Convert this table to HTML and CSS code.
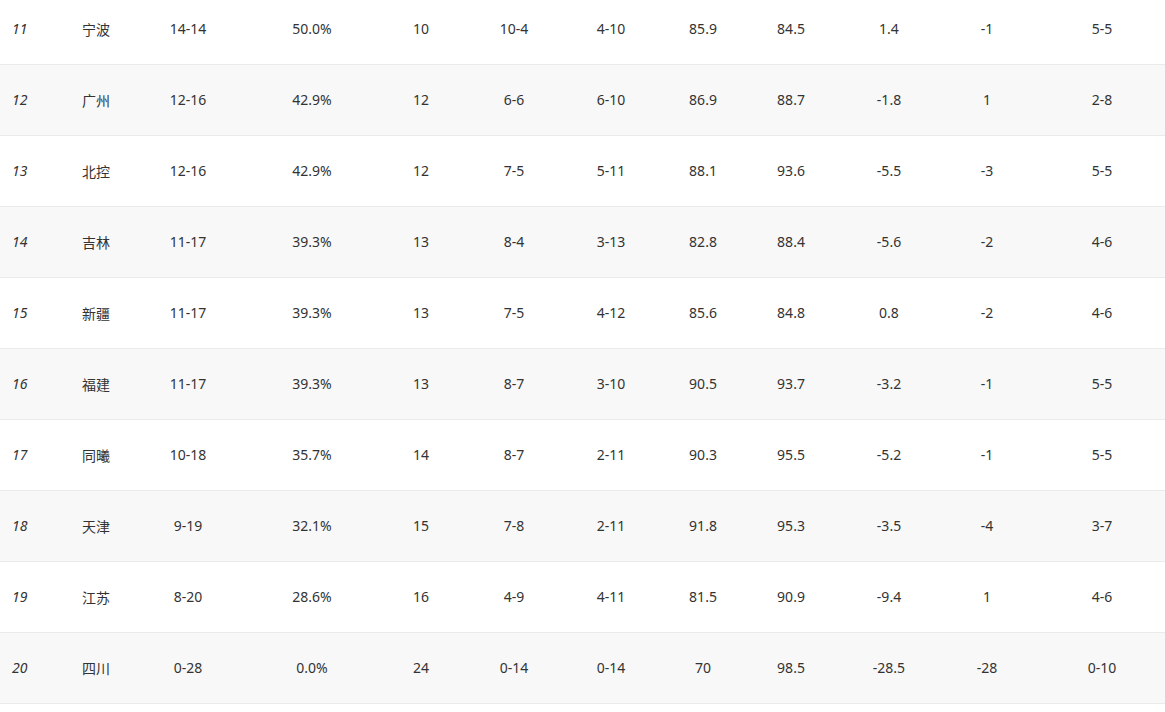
FILE: index.html
```html
<!DOCTYPE html>
<html lang="zh-CN">
<head>
<meta charset="utf-8">
<title>积分榜</title>
<link rel="stylesheet" href="styles.css">
</head>
<body>
<div class="viewport">
<table class="standings">
<colgroup>
<col class="c1"><col class="c2"><col class="c3"><col class="c4"><col class="c5"><col class="c6">
<col class="c7"><col class="c8"><col class="c9"><col class="c10"><col class="c11"><col class="c12">
</colgroup>
<tbody>
<tr><td class="rank">11</td><td class="team">宁波</td><td>14-14</td><td>50.0%</td><td>10</td><td>10-4</td><td>4-10</td><td>85.9</td><td>84.5</td><td>1.4</td><td>-1</td><td>5-5</td></tr>
<tr><td class="rank">12</td><td class="team">广州</td><td>12-16</td><td>42.9%</td><td>12</td><td>6-6</td><td>6-10</td><td>86.9</td><td>88.7</td><td>-1.8</td><td>1</td><td>2-8</td></tr>
<tr><td class="rank">13</td><td class="team">北控</td><td>12-16</td><td>42.9%</td><td>12</td><td>7-5</td><td>5-11</td><td>88.1</td><td>93.6</td><td>-5.5</td><td>-3</td><td>5-5</td></tr>
<tr><td class="rank">14</td><td class="team">吉林</td><td>11-17</td><td>39.3%</td><td>13</td><td>8-4</td><td>3-13</td><td>82.8</td><td>88.4</td><td>-5.6</td><td>-2</td><td>4-6</td></tr>
<tr><td class="rank">15</td><td class="team">新疆</td><td>11-17</td><td>39.3%</td><td>13</td><td>7-5</td><td>4-12</td><td>85.6</td><td>84.8</td><td>0.8</td><td>-2</td><td>4-6</td></tr>
<tr><td class="rank">16</td><td class="team">福建</td><td>11-17</td><td>39.3%</td><td>13</td><td>8-7</td><td>3-10</td><td>90.5</td><td>93.7</td><td>-3.2</td><td>-1</td><td>5-5</td></tr>
<tr><td class="rank">17</td><td class="team">同曦</td><td>10-18</td><td>35.7%</td><td>14</td><td>8-7</td><td>2-11</td><td>90.3</td><td>95.5</td><td>-5.2</td><td>-1</td><td>5-5</td></tr>
<tr><td class="rank">18</td><td class="team">天津</td><td>9-19</td><td>32.1%</td><td>15</td><td>7-8</td><td>2-11</td><td>91.8</td><td>95.3</td><td>-3.5</td><td>-4</td><td>3-7</td></tr>
<tr><td class="rank">19</td><td class="team">江苏</td><td>8-20</td><td>28.6%</td><td>16</td><td>4-9</td><td>4-11</td><td>81.5</td><td>90.9</td><td>-9.4</td><td>1</td><td>4-6</td></tr>
<tr><td class="rank">20</td><td class="team">四川</td><td>0-28</td><td>0.0%</td><td>24</td><td>0-14</td><td>0-14</td><td>70</td><td>98.5</td><td>-28.5</td><td>-28</td><td>0-10</td></tr>
</tbody>
</table>
</div>
</body>
</html>
```

FILE: styles.css
```css
html, body {
  margin: 0;
  padding: 0;
  background: #ffffff;
}
body {
  font-family: "Noto Sans", "Noto Sans CJK SC", sans-serif;
  font-size: 14px;
  color: #333333;
  overflow: hidden;
}
.viewport {
  height: 712px;
  overflow: hidden;
}
.standings {
  width: 1165px;
  table-layout: fixed;
  border-collapse: collapse;
  margin-top: -6px;
}
.c1 { width: 70px; }
.c2 { width: 51px; }
.c3 { width: 134px; }
.c4 { width: 114px; }
.c5 { width: 104px; }
.c6 { width: 82px; }
.c7 { width: 112px; }
.c8 { width: 72px; }
.c9 { width: 104px; }
.c10 { width: 92px; }
.c11 { width: 104px; }
.c12 { width: 126px; }
.standings td {
  height: 70px;
  padding: 0;
  text-align: center;
  vertical-align: middle;
  border-bottom: 1px solid #ebebeb;
  white-space: nowrap;
  line-height: 20px;
}
.standings tr:nth-child(even) td {
  background: #f8f8f8;
}
.standings td.rank {
  text-align: left;
  padding-left: 12px;
  font-style: italic;
}
.standings td.team {
  text-align: left;
  padding-left: 12px;
  font-family: "Noto Sans CJK SC", "Noto Sans", sans-serif;
}
```
